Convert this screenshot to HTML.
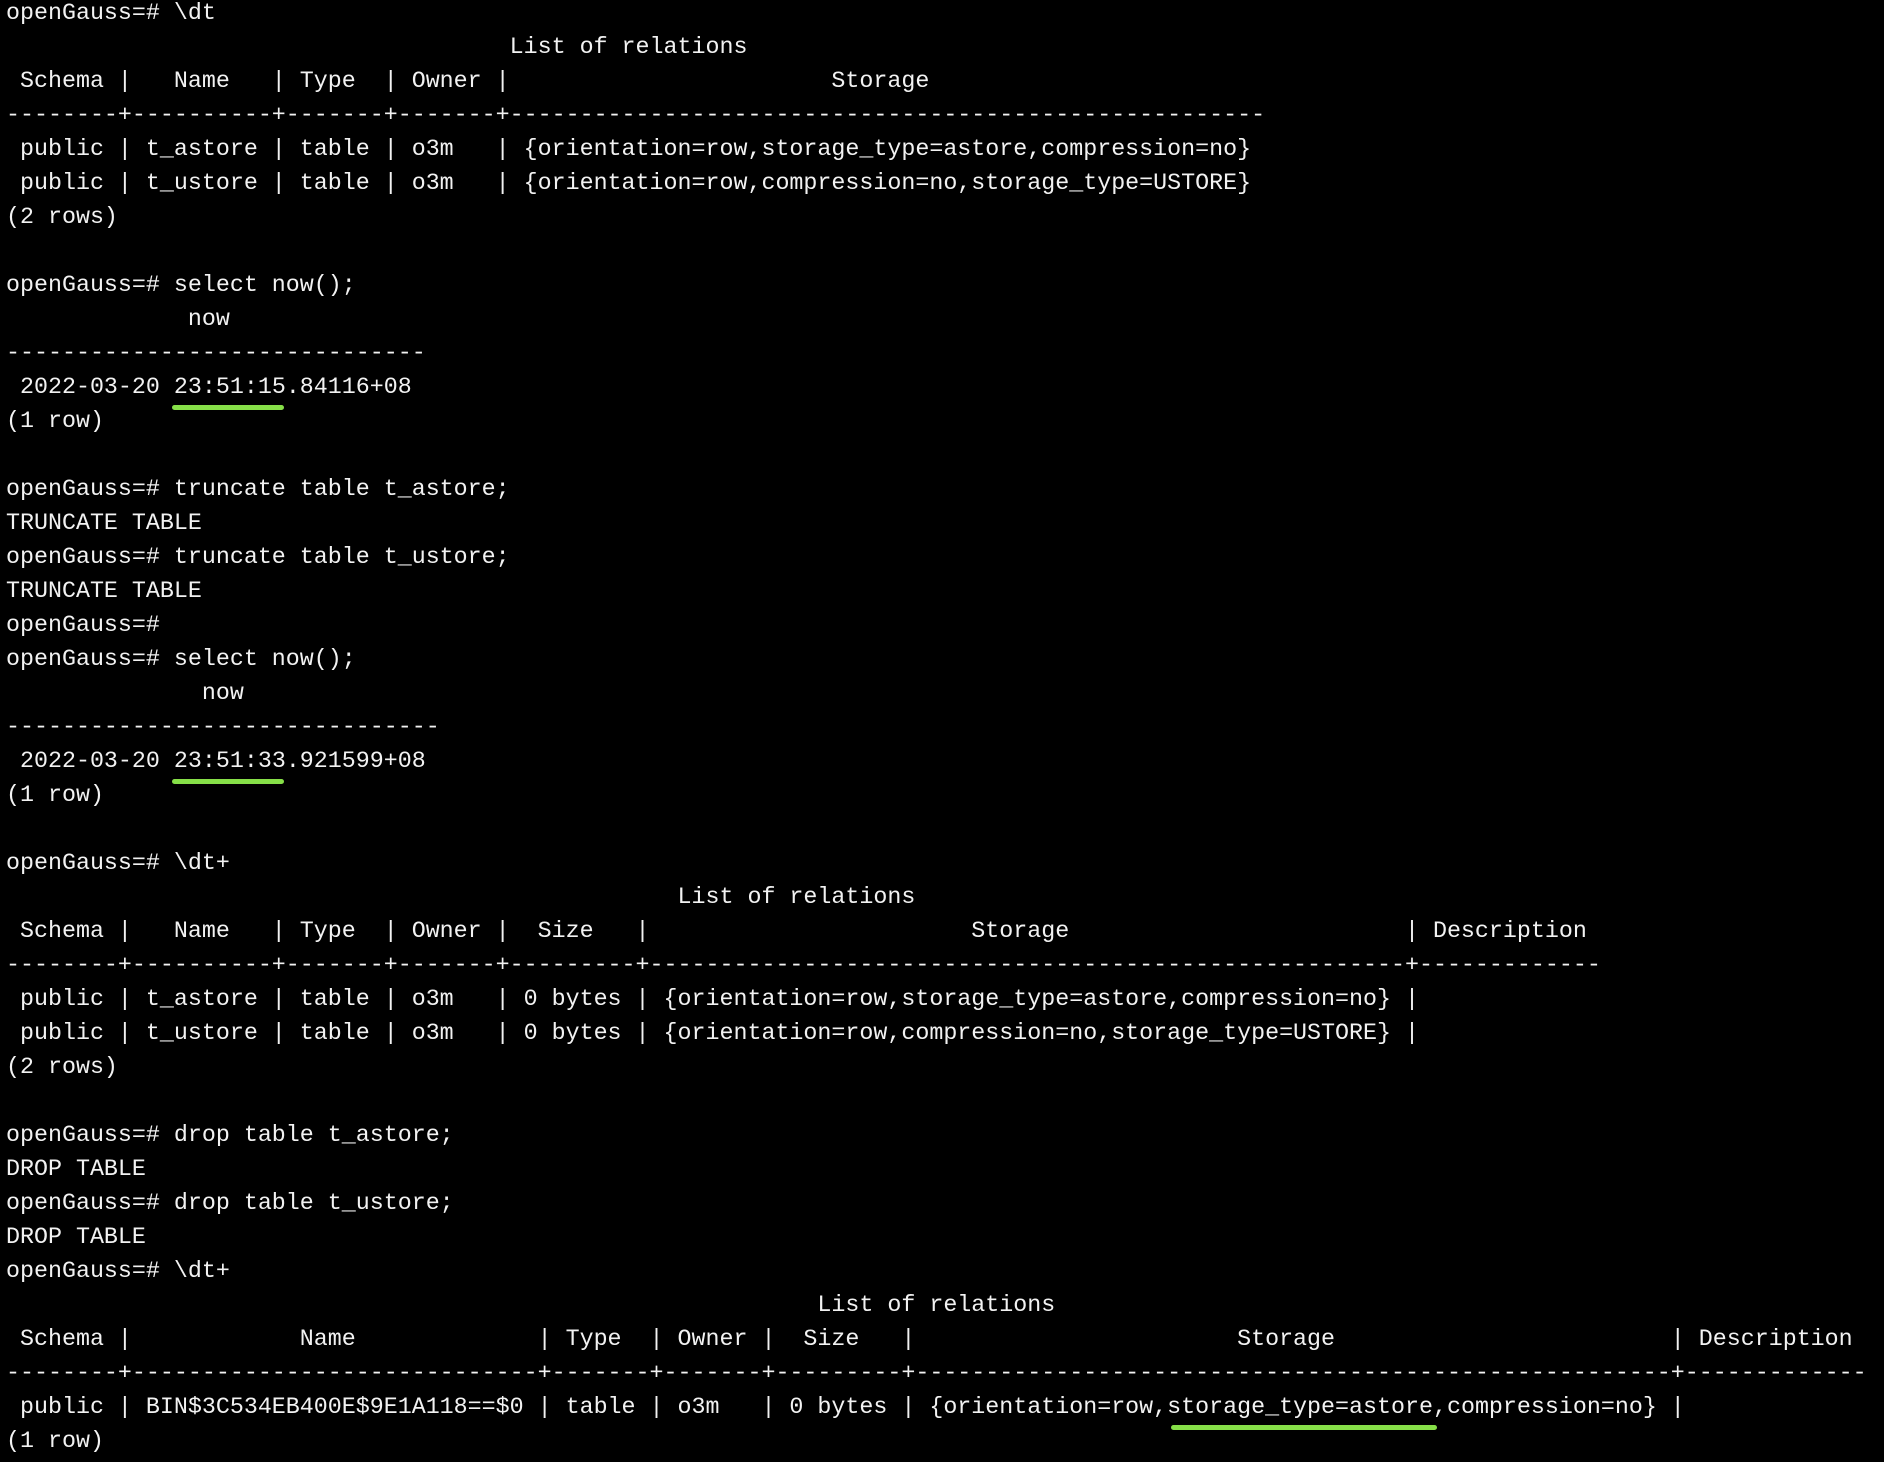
<!DOCTYPE html>
<html><head><meta charset="utf-8"><style>
html,body{margin:0;padding:0;background:#000;width:1884px;height:1462px;overflow:hidden}
pre{margin:0;position:absolute;left:6px;top:-3px;font-family:"Liberation Mono","DejaVu Sans Mono",monospace;font-size:23.32px;line-height:34px;color:#f2f2f2;white-space:pre}
.u{position:relative}
.u::after{content:"";position:absolute;left:-2px;right:2px;top:30px;height:5px;border-radius:3px;background:#86df48}
.u2::after{left:4px;right:-4px}
</style></head><body><pre>openGauss=# \dt
                                    List of relations
 Schema |   Name   | Type  | Owner |                       Storage
--------+----------+-------+-------+------------------------------------------------------
 public | t_astore | table | o3m   | {orientation=row,storage_type=astore,compression=no}
 public | t_ustore | table | o3m   | {orientation=row,compression=no,storage_type=USTORE}
(2 rows)

openGauss=# select now();
             now
------------------------------
 2022-03-20 <span class="u">23:51:15</span>.84116+08
(1 row)

openGauss=# truncate table t_astore;
TRUNCATE TABLE
openGauss=# truncate table t_ustore;
TRUNCATE TABLE
openGauss=#
openGauss=# select now();
              now
-------------------------------
 2022-03-20 <span class="u">23:51:33</span>.921599+08
(1 row)

openGauss=# \dt+
                                                List of relations
 Schema |   Name   | Type  | Owner |  Size   |                       Storage                        | Description
--------+----------+-------+-------+---------+------------------------------------------------------+-------------
 public | t_astore | table | o3m   | 0 bytes | {orientation=row,storage_type=astore,compression=no} |
 public | t_ustore | table | o3m   | 0 bytes | {orientation=row,compression=no,storage_type=USTORE} |
(2 rows)

openGauss=# drop table t_astore;
DROP TABLE
openGauss=# drop table t_ustore;
DROP TABLE
openGauss=# \dt+
                                                          List of relations
 Schema |            Name             | Type  | Owner |  Size   |                       Storage                        | Description
--------+-----------------------------+-------+-------+---------+------------------------------------------------------+-------------
 public | BIN$3C534EB400E$9E1A118==$0 | table | o3m   | 0 bytes | {orientation=row,<span class="u u2">storage_type=astore</span>,compression=no} |
(1 row)</pre></body></html>
